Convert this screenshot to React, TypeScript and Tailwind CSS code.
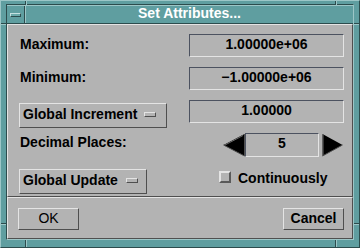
import React from "react";

const field =
  "border border-t-[#4c5260] border-l-[#4c5260] border-b-[#e4e4e4] border-r-[#e4e4e4] flex justify-center items-start";
const raised =
  "border border-t-[#e4e4e4] border-l-[#e4e4e4] border-b-[#4f4f4f] border-r-[#4f4f4f]";

function OptBar() {
  return (
    <div className="w-[12px] h-[5px] border border-t-[#e4e4e4] border-l-[#e4e4e4] border-b-[#4f4f4f] border-r-[#4f4f4f] bg-[#b3b3b3]" />
  );
}

export default function App() {
  return (
    <div className="relative w-[360px] h-[248px] bg-[#5f9ea0] border border-t-[#9cc6c7] border-l-[#9cc6c7] border-b-[#2c4c4d] border-r-[#2c4c4d] pt-[3px] pl-[5px] pr-[5px] pb-[7px] font-['Liberation_Sans',Arial,sans-serif] font-bold text-[14px] text-black">
      {/* resize handle dividers */}
      <div className="absolute left-[24px] top-0 w-[1px] h-[4px] bg-[#2c4c4d]" />
      <div className="absolute left-[25px] top-0 w-[1px] h-[4px] bg-[#9cc6c7]" />
      <div className="absolute left-[334px] top-0 w-[1px] h-[4px] bg-[#2c4c4d]" />
      <div className="absolute left-[335px] top-0 w-[1px] h-[4px] bg-[#9cc6c7]" />
      <div className="absolute left-[24px] bottom-0 w-[1px] h-[7px] bg-[#2c4c4d]" />
      <div className="absolute left-[25px] bottom-0 w-[1px] h-[7px] bg-[#9cc6c7]" />
      <div className="absolute left-[334px] bottom-0 w-[1px] h-[7px] bg-[#2c4c4d]" />
      <div className="absolute left-[335px] bottom-0 w-[1px] h-[7px] bg-[#9cc6c7]" />
      <div className="absolute left-0 top-[22px] w-[5px] h-[1px] bg-[#2c4c4d]" />
      <div className="absolute left-0 top-[23px] w-[5px] h-[1px] bg-[#9cc6c7]" />
      <div className="absolute right-0 top-[22px] w-[5px] h-[1px] bg-[#2c4c4d]" />
      <div className="absolute right-0 top-[23px] w-[5px] h-[1px] bg-[#9cc6c7]" />
      <div className="absolute left-0 top-[222px] w-[5px] h-[1px] bg-[#2c4c4d]" />
      <div className="absolute left-0 top-[223px] w-[5px] h-[1px] bg-[#9cc6c7]" />
      <div className="absolute right-0 top-[222px] w-[5px] h-[1px] bg-[#2c4c4d]" />
      <div className="absolute right-0 top-[223px] w-[5px] h-[1px] bg-[#9cc6c7]" />

      <div className="flex flex-col h-full border border-t-[#2c4c4d] border-l-[#2c4c4d] border-b-[#9cc6c7] border-r-[#9cc6c7]">
        {/* Title bar */}
        <div className="flex h-[19px] border-t border-b border-t-[#9cc6c7] border-b-[#2c4c4d]">
          <div className="w-[18px] h-full border-r border-r-[#2c4c4d] flex items-center justify-center">
            <div className="w-[11px] h-[4px] border border-t-[#c4e0e0] border-l-[#c4e0e0] border-b-[#2c4c4d] border-r-[#2c4c4d] bg-[#6aa8a9]" />
          </div>
          <div className="flex-1 h-full border-l border-l-[#9cc6c7] flex justify-center items-start">
            <span className="text-white leading-[15px]">Set Attributes...</span>
          </div>
        </div>

        {/* Form panel */}
        <div className={`h-[173px] bg-[#b3b3b3] ${raised} flex flex-col`}>
          {/* Row 1 */}
          <div className="flex h-[23px] mt-[9px]">
            <div className="ml-[12px] leading-[21px]">Maximum:</div>
            <div className={`ml-auto mr-[8px] w-[155px] h-[23px] ${field}`}>
              <span className="leading-[19px]">1.00000e+06</span>
            </div>
          </div>
          {/* Row 2 */}
          <div className="flex h-[23px] mt-[10px]">
            <div className="ml-[12px] leading-[21px]">Minimum:</div>
            <div className={`ml-auto mr-[8px] w-[155px] h-[23px] ${field}`}>
              <span className="leading-[19px]">−1.00000e+06</span>
            </div>
          </div>
          {/* Row 3 */}
          <div className="flex h-[28px] mt-[10px] items-start">
            <div className={`ml-[11px] mt-[3px] w-[148px] h-[25px] ${raised} flex items-start pl-[3px]`}>
              <span className="leading-[21px]">Global Increment</span>
              <div className="ml-[7px] mt-[8px]">
                <OptBar />
              </div>
            </div>
            <div className={`ml-auto mr-[8px] w-[155px] h-[23px] ${field}`}>
              <span className="leading-[19px]">1.00000</span>
            </div>
          </div>
          {/* Row 4 */}
          <div className="flex h-[24px] mt-[5px] items-start">
            <div className="ml-[12px] leading-[19px]">Decimal Places:</div>
            <div className="ml-auto mr-[9px] w-[120px] h-[24px] flex items-start">
              <svg width="22" height="24" viewBox="0 0 22 24" className="block">
                <polygon points="0.5,12 21.5,1 21.5,23" fill="#000" />
                <polyline points="0.5,12 21.5,23 21.5,1" fill="none" stroke="#4f4f4f" strokeWidth="1" />
                <polyline points="2,12 20,2.5" fill="none" stroke="#6a6a6a" strokeWidth="1" />
              </svg>
              <div className={`w-[74px] h-[24px] ${field}`}>
                <span className="leading-[19px]">5</span>
              </div>
              <div className="w-[3px]" />
              <svg width="21" height="24" viewBox="0 0 21 24" className="block">
                <polygon points="0.5,1 20.5,12 0.5,23" fill="#000" />
                <polyline points="0.5,23 20.5,12" fill="none" stroke="#4f4f4f" strokeWidth="1" />
                <polyline points="1,2 1,22" fill="none" stroke="#6a6a6a" strokeWidth="1" />
              </svg>
            </div>
          </div>
          {/* Row 5 */}
          <div className="flex h-[25px] mt-[12px] items-start">
            <div className={`ml-[11px] w-[128px] h-[25px] ${raised} flex items-start pl-[3px]`}>
              <span className="leading-[21px]">Global Update</span>
              <div className="ml-[8px] mt-[8px]">
                <OptBar />
              </div>
            </div>
            <div className="ml-auto mr-[8px] w-[125px] flex items-start">
              <div className="mt-[2px] w-[12px] h-[12px] border-2 border-t-[#e4e4e4] border-l-[#e4e4e4] border-b-[#5a5a5a] border-r-[#5a5a5a] bg-[#b3b3b3]" />
              <span className="ml-[7px] leading-[19px]">Continuously</span>
            </div>
          </div>
        </div>

        {/* Button panel */}
        <div className={`h-[42px] bg-[#b3b3b3] ${raised} flex items-start`}>
          <div className={`ml-[10px] mt-[10px] w-[61px] h-[22px] ${raised} flex justify-center items-start`}>
            <span className="leading-[19px] font-normal">OK</span>
          </div>
          <div className={`ml-auto mr-[8px] mt-[10px] w-[61px] h-[22px] ${raised} flex justify-center items-start`}>
            <span className="leading-[19px]">Cancel</span>
          </div>
        </div>
      </div>
    </div>
  );
}
